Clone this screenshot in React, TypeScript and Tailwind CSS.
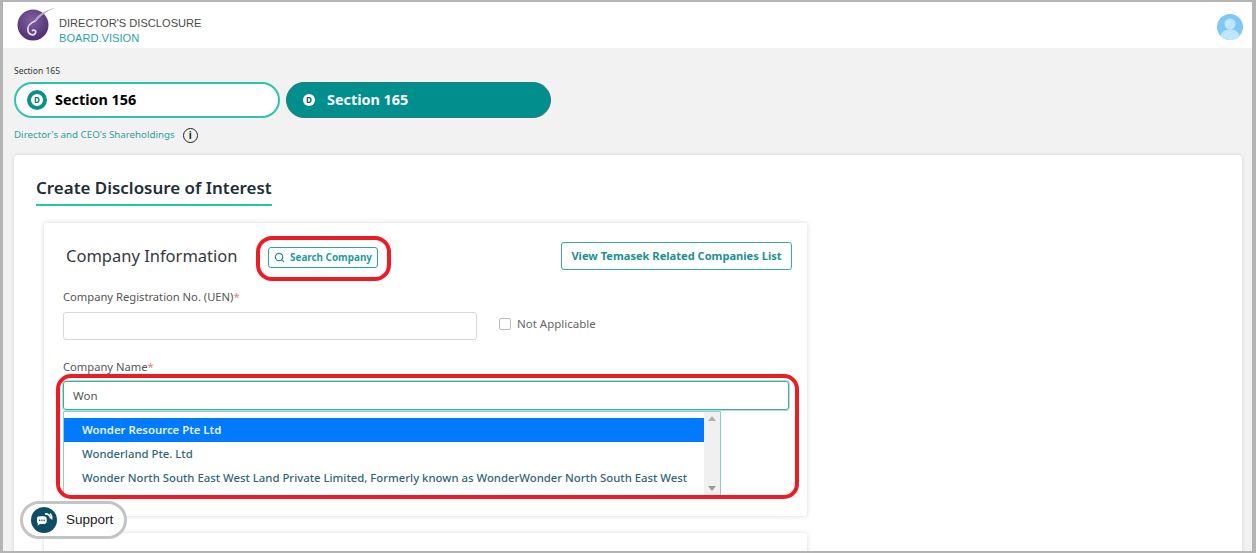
// App.tsx
import React from "react";
import { Search } from "lucide-react";

const NOTO = "font-['Noto_Sans','Open_Sans',sans-serif]";

const Logo = () => (
  <svg width="38" height="36" viewBox="0 0 38 36" className="shrink-0">
    <defs>
      <radialGradient id="orb" cx="45%" cy="35%" r="75%">
        <stop offset="0%" stopColor="#80609f" />
        <stop offset="100%" stopColor="#47286a" />
      </radialGradient>
    </defs>
    <circle cx="16" cy="18" r="15.5" fill="url(#orb)" />
    <path d="M38 1C29 3 21 7 17 14L19 15C23 9 30 4 38 1Z" fill="#b4a8c4" />
    <path d="M18 14C13 16 10 20 11 24C12 28 17 29 18.5 26C19.5 23.5 16.5 22 15 24" stroke="#e6deee" strokeWidth="1.7" fill="none" />
  </svg>
);

const Avatar = () => (
  <svg width="26" height="26" viewBox="0 0 26 26" className="mt-[4px]">
    <circle cx="13" cy="13" r="13" fill="#7ec8f5" />
    <circle cx="13" cy="10" r="5.5" fill="#c0e6fd" />
    <path d="M3.5 22C5 16.5 9 15.5 13 15.5C17 15.5 21 16.5 22.5 22C20 24.6 16.5 26 13 26C9.5 26 6 24.6 3.5 22Z" fill="#c0e6fd" />
  </svg>
);

const SupportIcon = () => (
  <svg width="26" height="26" viewBox="0 0 26 26">
    <circle cx="13" cy="13" r="13" fill="#0e4d63" />
    <path d="M6 11.5C6 10 7 9.3 8.5 9.3H13C14.7 9.3 15.7 10.3 15.7 12V14.5C15.7 16 14.7 17 13 17H9L6.5 18.7L7 16.7C6.3 16.2 6 15.5 6 14.5Z" fill="#fff" />
    <circle cx="8.6" cy="13.2" r="0.8" fill="#0e4d63" />
    <circle cx="10.9" cy="13.2" r="0.8" fill="#0e4d63" />
    <circle cx="13.2" cy="13.2" r="0.8" fill="#0e4d63" />
    <path d="M14 7C16.8 6.6 19.3 8.4 19.6 11.5" stroke="#fff" strokeWidth="1.7" fill="none" />
    <path d="M19 6.5C20.6 8 21.2 10 20.8 12.5" stroke="#fff" strokeWidth="1.2" fill="none" />
  </svg>
);

const App: React.FC = () => {
  return (
    <div className={`relative h-[553px] w-[1256px] overflow-hidden border-t-2 border-r-[4px] border-b-2 border-l-[3px] border-[#b4b4b4] bg-[#f2f2f2] ${NOTO}`}>
      <header className="flex h-[46px] items-center justify-between bg-white pl-[14px] pr-[9px]">
        <div className="flex items-center gap-[4px]">
          <Logo />
          <div className="mt-[12px] font-['Liberation_Sans',sans-serif] text-[11.1px] leading-[15px]">
            <div className="text-[#4a4a4a]">DIRECTOR'S DISCLOSURE</div>
            <div className="text-[#2aa3a8]">BOARD.VISION</div>
          </div>
        </div>
        <Avatar />
      </header>

      <div className="px-[11px]">
        <p className="mt-[17px] text-[8.5px] leading-[12px] text-[#333]">Section 165</p>
        <div className="mt-[5px] flex gap-[6px]">
          <div className="flex h-[36px] w-[266px] items-center gap-[8px] rounded-full border-2 border-[#2cc4ac] bg-white pl-[11px]">
            <span className="flex h-[20px] w-[20px] items-center justify-center rounded-full border-[4px] border-[#0d8f8c] bg-white text-[8px] font-bold leading-none text-[#0d6f70]">D</span>
            <span className="text-[14.4px] font-bold text-black">Section 156</span>
          </div>
          <div className="flex h-[36px] w-[265px] items-center gap-[12px] rounded-full border border-[#2c7c74] bg-[#008f8c] pl-[16px]">
            <span className="flex h-[12px] w-[12px] items-center justify-center rounded-full bg-white text-[8px] font-bold leading-none text-[#0d5560]">D</span>
            <span className="text-[14.4px] font-bold text-white">Section 165</span>
          </div>
        </div>
        <div className="mt-[9px] flex h-[16px] items-center gap-[8px]">
          <span className="text-[9.75px] text-[#2f9ea0]">Director's and CEO's Shareholdings</span>
          <span className="flex h-[15px] w-[15px] items-center justify-center rounded-full border-[1.5px] border-[#222] text-[10px] font-bold leading-none text-[#222]">i</span>
        </div>

        <main className="mt-[12px] h-[500px] w-[1228px] rounded-[4px] bg-white pl-[22px] pt-[20px] shadow-[0_0_4px_rgba(0,0,0,0.12)]">
          <h1 className="w-[236px] border-b-2 border-[#1fc9a4] pb-[3px] text-[16.95px] font-semibold leading-[26px] text-[#222b38]">
            Create Disclosure of Interest
          </h1>

          <section className="ml-[8px] mt-[17px] h-[293px] w-[763px] rounded-[3px] bg-white pl-[19px] pr-[15px] shadow-[0_0_5px_rgba(0,0,0,0.16)]">
            <div className="flex items-center pt-[19px]">
              <h2 className="ml-[3px] w-[202px] text-[16.5px] font-normal leading-[28px] text-[#33383f]">Company Information</h2>
              <button className="mt-[2px] flex h-[21px] w-[110px] items-center justify-center gap-[5px] rounded-[3px] border border-[#2ea3a3] bg-white text-[9.9px] font-bold text-[#1f9c9c]">
                <Search size={11} strokeWidth={2.6} className="text-[#1f8f96]" />
                Search Company
              </button>
              <button className="ml-auto h-[28px] w-[231px] rounded-[3px] border border-[#3aa9a9] bg-white pt-[1px] text-[11.1px] font-bold text-[#1b9090]">
                View Temasek Related Companies List
              </button>
            </div>

            <label className="mt-[19px] block text-[11.2px] leading-[16px] text-[#555]">
              Company Registration No. (UEN)<span className="text-[#ef7b7b]">*</span>
            </label>
            <div className="mt-[7px] flex items-center">
              <input className="h-[28px] w-[414px] rounded-[3px] border border-[#d8d8d8] bg-white" />
              <span className="mb-[4px] ml-[22px] h-[12px] w-[12px] rounded-[2px] border border-[#bdbdbd] bg-white" />
              <span className="mb-[4px] ml-[6px] text-[11.5px] text-[#666]">Not Applicable</span>
            </div>

            <label className="mt-[19px] block text-[11.2px] leading-[16px] text-[#555]">
              Company Name<span className="text-[#ef7b7b]">*</span>
            </label>
            <div className="mt-[6px] flex h-[29px] w-[726px] items-center rounded-[3px] border border-[#4aa7a0] pl-[9px] text-[11.5px] text-[#555] shadow-[0_0_0_1px_#a6e4da]">
              Won
            </div>
            <div className="mt-[1px] flex h-[85px] w-[658px] rounded-b-[2px] border border-[#7fd6c8] bg-white">
              <ul className="min-w-0 flex-1 pt-[6px] text-[11.35px] font-medium text-[#2e6678]">
                <li className="flex h-[24px] items-center bg-[#007bff] pl-[18px] font-semibold text-[#e8f3ff]">Wonder Resource Pte Ltd</li>
                <li className="flex h-[24px] items-center pl-[18px]">Wonderland Pte. Ltd</li>
                <li className="flex h-[24px] items-center whitespace-nowrap pl-[18px]">
                  Wonder North South East West Land Private Limited, Formerly known as WonderWonder North South East West
                </li>
              </ul>
              <div className="flex w-[16px] flex-col items-center justify-between bg-[#f0f0f0] py-[4px]">
                <span className="h-0 w-0 border-x-[4px] border-b-[5px] border-x-transparent border-b-[#b0b0b0]" />
                <span className="h-0 w-0 border-x-[4px] border-t-[5px] border-x-transparent border-t-[#9a9a9a]" />
              </div>
            </div>
          </section>

          <section className="ml-[8px] mt-[17px] h-[60px] w-[763px] rounded-[3px] bg-white shadow-[0_0_5px_rgba(0,0,0,0.16)]" />
        </main>
      </div>

      {/* annotation boxes and the floating support pill sit over the page */}
      <div className="absolute left-[253px] top-[234px] h-[45px] w-[135px] rounded-[16px] border-[4px] border-[#ed1c24]" />
      <div className="absolute left-[53px] top-[372px] h-[125px] w-[743px] rounded-[15px] border-[4px] border-[#ed1c24]" />
      <div className="absolute left-[17px] top-[499px] flex h-[38px] w-[107px] items-center gap-[9px] rounded-full border-[3px] border-[#c4c4c4] bg-white pl-[8px] font-['Liberation_Sans',sans-serif] text-[13.5px] text-[#222]">
        <SupportIcon />
        Support
      </div>
    </div>
  );
};

export default App;
